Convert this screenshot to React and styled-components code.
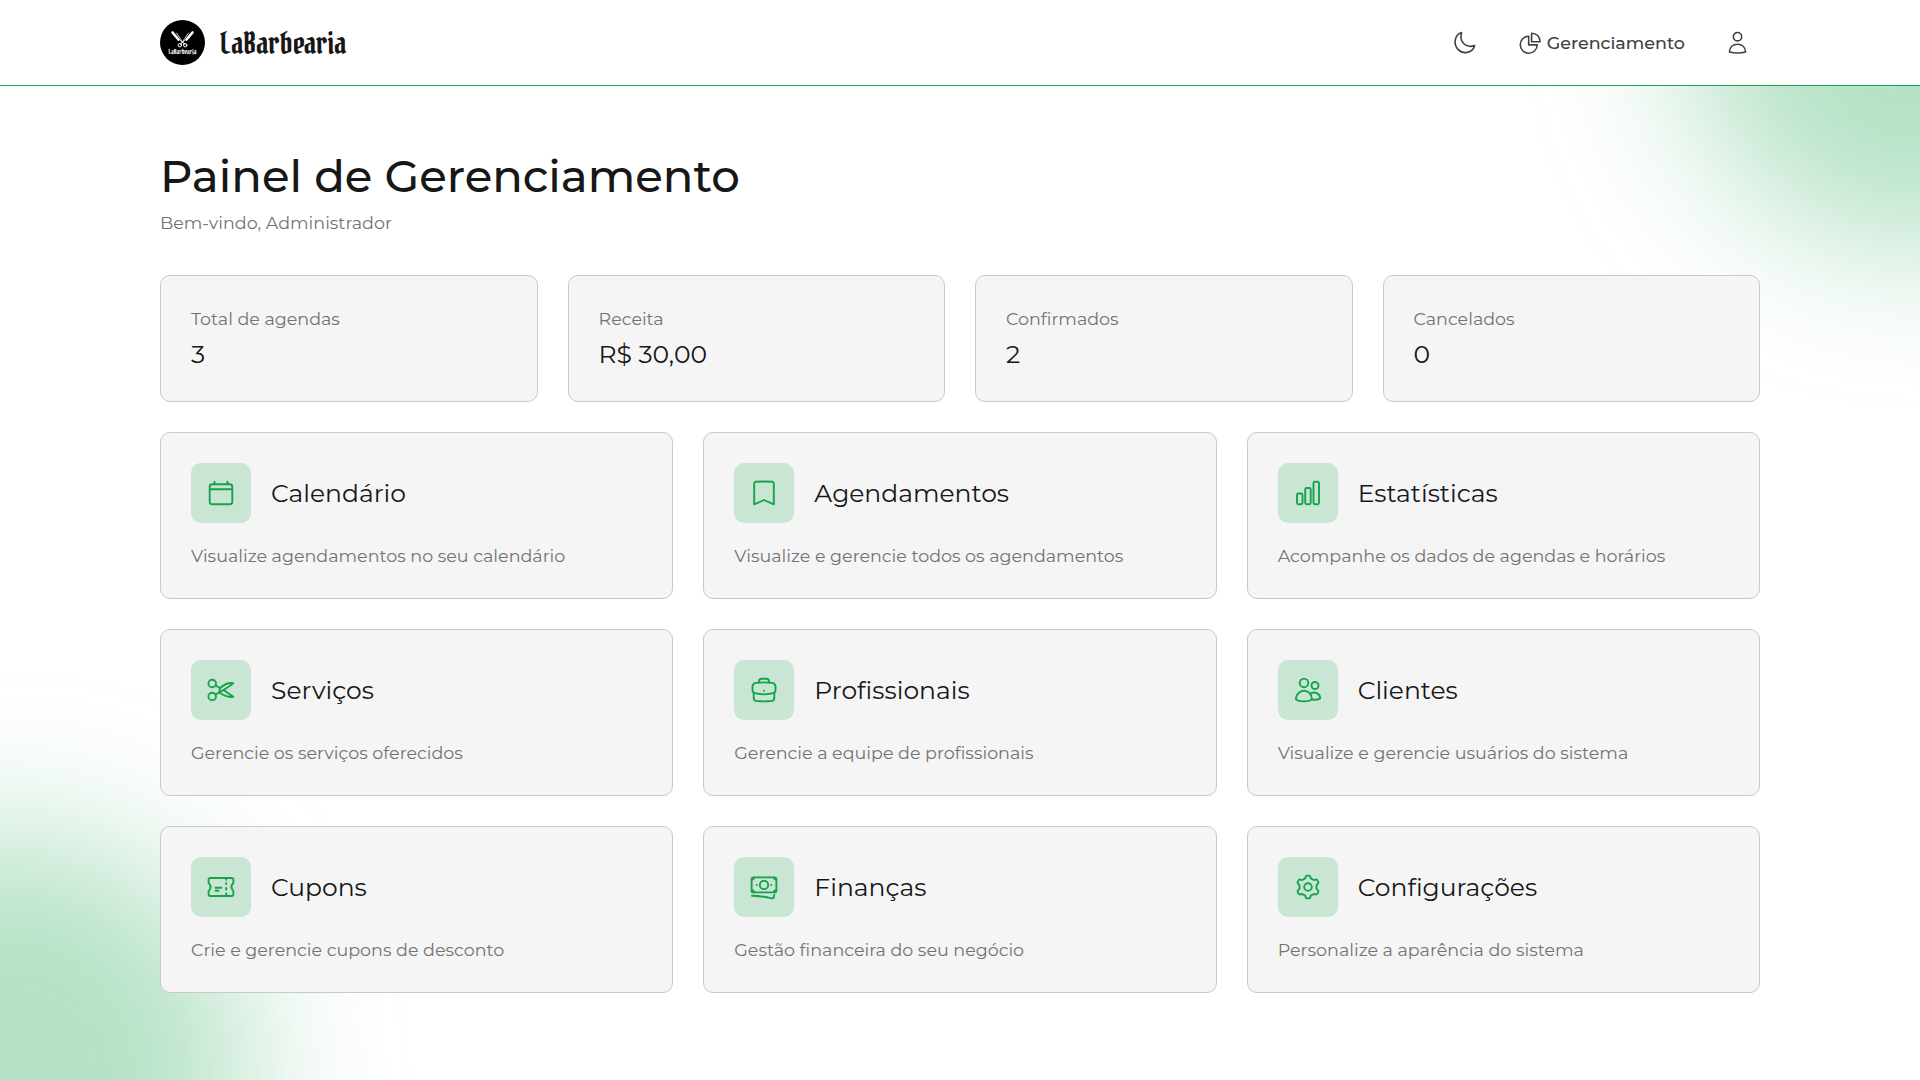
import React from 'react'
import styled, { createGlobalStyle } from 'styled-components'

const GlobalStyle = createGlobalStyle`
  * {
    box-sizing: border-box;
  }

  body {
    margin: 0;
    background: #fff;
    color: #171717;
    font-family: Montserrat, Inter, sans-serif;
  }

  h1, h2, p {
    margin: 0;
    font-weight: 400;
  }
`

const Page = styled.div`
  position: relative;
  height: 1080px;
  overflow: hidden;
`

const Glow = styled.div`
  position: absolute;
  width: 490px;
  height: 490px;
  border-radius: 50%;
  background: rgba(22, 163, 74, 0.32);
  filter: blur(75px);
`

const TopGlow = styled(Glow)`
  top: -240px;
  right: -250px;
`

const BottomGlow = styled(Glow)`
  left: -240px;
  bottom: -241px;
`

const Header = styled.header`
  position: relative;
  height: 86px;
  padding: 0 160px;
  display: flex;
  align-items: center;
  justify-content: space-between;
  background: #fff;
  border-bottom: 1px solid #16a34a;
`

const Brand = styled.a`
  display: flex;
  align-items: center;
  gap: 15px;
`

const BrandName = styled.span`
  font-family: 'Pirata One', 'DejaVu Serif Condensed', serif;
  font-size: 30px;
  line-height: 38px;
  white-space: nowrap;
`

const Nav = styled.nav`
  display: flex;
  align-items: center;
  padding: 0 10px 1px 0;
  color: #404040;
`

const NavItem = styled.a`
  display: flex;
  align-items: center;
  gap: 5px;
  margin-left: 40px;
  font-size: 17.5px;
  font-weight: 500;
`

const Main = styled.main`
  position: relative;
  padding: 65px 160px 0;
`

const Title = styled.h1`
  font-size: 45px;
  font-weight: 500;
  line-height: 50px;
`

const Muted = styled.p`
  color: #737373;
  font-size: 17.5px;
  line-height: 25px;
`

const Welcome = styled(Muted)`
  margin: 9px 0 40px;
`

const Grid = styled.section`
  display: grid;
  grid-template-columns: repeat(${({ $columns }) => $columns}, 1fr);
  gap: 30px;
  margin-bottom: 30px;
`

const Card = styled.div`
  padding: 30px;
  background: #f5f5f5;
  border: 1px solid #c9c9c9;
  border-radius: 10px;
`

const Value = styled.p`
  margin-top: 6px;
  font-size: 25px;
  line-height: 34px;
`

const CardHead = styled.div`
  display: flex;
  align-items: center;
  gap: 20px;
  margin-bottom: 20px;
`

const IconBox = styled.div`
  display: flex;
  align-items: center;
  justify-content: center;
  width: 60px;
  height: 60px;
  border-radius: 10px;
  background: #c9e6d4;
  color: #16a34a;
`

const CardTitle = styled.h2`
  font-size: 25px;
  line-height: 35px;
`

function Icon({ size = 30, children }) {
  return (
    <svg
      width={size}
      height={size}
      viewBox="0 0 30 30"
      fill="none"
      stroke="currentColor"
      strokeWidth="1.9"
      strokeLinecap="round"
      strokeLinejoin="round"
    >
      {children}
    </svg>
  )
}

const icons = {
  calendar: (
    <>
      <rect x="3.7" y="6.3" width="22.6" height="20" rx="2.5" />
      <path d="M4 11.2h22M8.5 3.6v2.6M21.5 3.6v2.6" />
    </>
  ),
  bookmark: (
    <path d="M5.2 26.3V5.8Q5.2 4 7 3.8Q15 3.1 23 3.8Q24.8 4 24.8 5.8V26.3L15 22Z" />
  ),
  chart: (
    <>
      <rect x="4" y="15.5" width="5.5" height="10.8" rx="1.5" />
      <rect x="12.2" y="10" width="5.5" height="16.3" rx="1.5" />
      <rect x="20.5" y="3.8" width="5.5" height="22.5" rx="1.5" />
    </>
  ),
  scissors: (
    <>
      <circle cx="6.2" cy="8.5" r="3.8" />
      <circle cx="6.2" cy="21.5" r="3.8" />
      <path d="M9.5 10.5L14 13C18 9.5 23 7.4 27.3 8.2C24 11.5 19 14 13.2 17.5L9.5 19.5" />
      <path d="M14 13L13.2 17.5M17.5 15L27.3 21.8C23 22.6 18 20.7 13.2 17.5" />
    </>
  ),
  briefcase: (
    <>
      <path d="M10 7.5V6.3Q10 3.7 12.8 3.7H17.2Q20 3.7 20 6.3V7.5" />
      <path d="M7 7.9Q15 6.9 23 7.9Q26.5 8.4 26.5 11.4V15Q26.5 17.5 24 18.2Q15 20.5 6 18.2Q3.5 17.5 3.5 15V11.4Q3.5 8.4 7 7.9Z" />
      <path d="M4.7 18V23Q4.7 25.6 7.3 26Q15 26.8 22.7 26Q25.3 25.6 25.3 23V18M15 15.6v.1" />
    </>
  ),
  people: (
    <>
      <circle cx="11" cy="7.9" r="4.3" />
      <circle cx="22" cy="10.5" r="3.5" />
      <path d="M11 15.8C6.5 15.8 3 19.5 2.8 24C5 27 16.7 27.3 19 24C18.7 19.5 15.5 15.8 11 15.8Z" />
      <path d="M17.4 18.7C21.5 16.2 27 18.2 27.2 23.4Q24 25.3 19 24.6" />
    </>
  ),
  coupon: (
    <>
      <path d="M4.3 6H25.7Q27.4 6 27.4 7.9V10.9Q23.5 15 27.4 19.1V22.1Q27.4 24 25.7 24H4.3Q2.6 24 2.6 22.1V19.1Q6.5 15 2.6 10.9V7.9Q2.6 6 4.3 6Z" />
      <path d="M20.2 6.5v1.2M20.2 11.2v.8M20.2 16v1.5M20.2 21.5v1.5M9.5 15.8h6M9.5 18.7h3" />
    </>
  ),
  money: (
    <>
      <rect x="2.6" y="5.4" width="24.8" height="15" rx="2" />
      <circle cx="15" cy="12.9" r="4.2" />
      <path d="M2.8 7.7Q4.9 7.7 4.9 5.6M27.2 7.7Q25.1 7.7 25.1 5.6M2.8 18.1Q4.9 18.1 4.9 20.2M27.2 18.1Q25.1 18.1 25.1 20.2M7.8 12.9v.1M22.2 12.9v.1" />
      <path d="M3 23.8Q14 24.2 22.7 26.3Q24.6 26.7 24.9 24.9L25.2 23" />
    </>
  ),
  gear: (
    <>
      <path d="M12.2 6.4L12.8 4.4Q13 3.6 14 3.6H16Q17 3.6 17.2 4.4L17.8 6.4L20.7 8L22.9 7.6Q23.8 7.4 24.3 8.2L25.3 10.2Q25.7 11 25 11.7L23.5 13.3V16.7L25 18.3Q25.7 19 25.3 19.8L24.3 21.8Q23.8 22.6 22.9 22.4L20.7 22L17.8 23.6L17.2 25.6Q17 26.4 16 26.4H14Q13 26.4 12.8 25.6L12.2 23.6L9.3 22L7.1 22.4Q6.2 22.6 5.7 21.8L4.7 19.8Q4.3 19 5 18.3L6.5 16.7V13.3L5 11.7Q4.3 11 4.7 10.2L5.7 8.2Q6.2 7.4 7.1 7.6L9.3 8Z" />
      <circle cx="15" cy="15" r="3.8" />
    </>
  ),
  moon: (
    <path d="M11.4 3C2.8 6 1.5 17.2 7.2 23.2C13.3 29.7 24.5 28 27.2 18.7C16.5 22.3 8.4 14.3 11.4 3Z" />
  ),
  pie: (
    <>
      <path d="M14 7.5A10.2 10.2 0 1 0 24.3 17.8H14Z" />
      <path d="M17.5 3.8V14H27.7C27.7 8 23.5 3.8 17.5 3.8Z" />
    </>
  ),
  user: (
    <>
      <circle cx="15" cy="8" r="5" />
      <path d="M15 17C9.5 17 5.6 20.8 5.3 26.3Q15 29 24.7 26.3C24.4 20.8 20.5 17 15 17Z" />
    </>
  ),
}

function Logo() {
  return (
    <svg width="45" height="45" viewBox="0 0 45 45">
      <circle cx="22.5" cy="22.5" r="22.5" fill="#000" />
      <g stroke="#fff" fill="none" strokeLinecap="round">
        <path d="M12.5 12.5l6 7M32.5 12.5l-6 7" strokeWidth="2.6" />
        <path d="M18 18.5l7 6M27 18.5l-7 6M16.5 13l7.5 11M28.5 13l-7.5 11" strokeWidth="0.8" />
        <circle cx="19.8" cy="25.2" r="1.7" strokeWidth="1" />
        <circle cx="25.2" cy="25.2" r="1.7" strokeWidth="1" />
      </g>
      <text
        x="8.5"
        y="34"
        fill="#fff"
        fontFamily="'Pirata One', 'DejaVu Serif Condensed', serif"
        fontSize="7"
        textLength="28"
        lengthAdjust="spacingAndGlyphs"
      >
        LaBarbearia
      </text>
    </svg>
  )
}

const stats = [
  { label: 'Total de agendas', value: '3' },
  { label: 'Receita', value: 'R$ 30,00' },
  { label: 'Confirmados', value: '2' },
  { label: 'Cancelados', value: '0' },
]

const sections = [
  { icon: 'calendar', title: 'Calendário', text: 'Visualize agendamentos no seu calendário' },
  { icon: 'bookmark', title: 'Agendamentos', text: 'Visualize e gerencie todos os agendamentos' },
  { icon: 'chart', title: 'Estatísticas', text: 'Acompanhe os dados de agendas e horários' },
  { icon: 'scissors', title: 'Serviços', text: 'Gerencie os serviços oferecidos' },
  { icon: 'briefcase', title: 'Profissionais', text: 'Gerencie a equipe de profissionais' },
  { icon: 'people', title: 'Clientes', text: 'Visualize e gerencie usuários do sistema' },
  { icon: 'coupon', title: 'Cupons', text: 'Crie e gerencie cupons de desconto' },
  { icon: 'money', title: 'Finanças', text: 'Gestão financeira do seu negócio' },
  { icon: 'gear', title: 'Configurações', text: 'Personalize a aparência do sistema' },
]

export default function App() {
  return (
    <Page>
      <GlobalStyle />
      <TopGlow />
      <BottomGlow />
      <Header>
        <Brand>
          <Logo />
          <BrandName>LaBarbearia</BrandName>
        </Brand>
        <Nav>
          <NavItem>
            <Icon size={25}>{icons.moon}</Icon>
          </NavItem>
          <NavItem>
            <Icon size={25}>{icons.pie}</Icon>
            Gerenciamento
          </NavItem>
          <NavItem>
            <Icon size={25}>{icons.user}</Icon>
          </NavItem>
        </Nav>
      </Header>
      <Main>
        <Title>Painel de Gerenciamento</Title>
        <Welcome>Bem-vindo, Administrador</Welcome>
        <Grid $columns={4}>
          {stats.map(({ label, value }) => (
            <Card key={label}>
              <Muted>{label}</Muted>
              <Value>{value}</Value>
            </Card>
          ))}
        </Grid>
        <Grid $columns={3}>
          {sections.map(({ icon, title, text }) => (
            <Card key={title}>
              <CardHead>
                <IconBox>
                  <Icon>{icons[icon]}</Icon>
                </IconBox>
                <CardTitle>{title}</CardTitle>
              </CardHead>
              <Muted>{text}</Muted>
            </Card>
          ))}
        </Grid>
      </Main>
    </Page>
  )
}
